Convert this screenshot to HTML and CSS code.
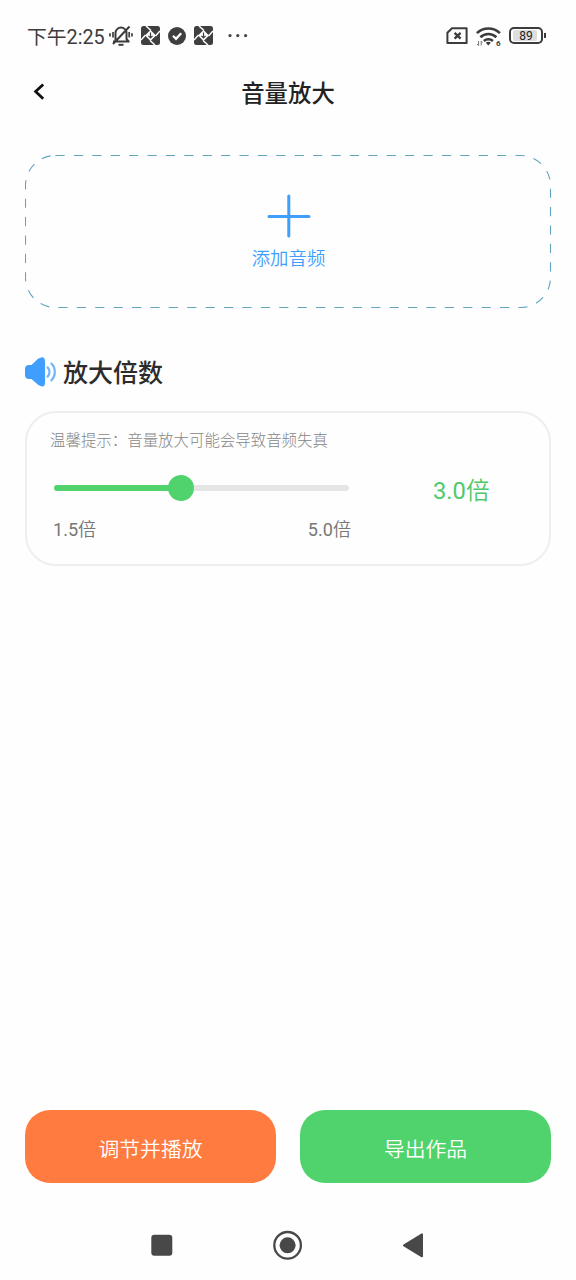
FILE: index.html
```html
<!DOCTYPE html>
<html lang="zh-CN">
<head>
<meta charset="utf-8">
<meta name="viewport" content="width=device-width, initial-scale=1">
<title>音量放大</title>
<link rel="stylesheet" href="styles.css">
</head>
<body>
<div class="screen">
  <div class="status">
    <span class="clock">下午2:25</span>
    <svg class="bell" width="24" height="22" viewBox="0 0 24 22" fill="none" stroke="#3c3c3c" stroke-width="2">
      <path d="M4 16.5H20.5M6.5 16V8a5.5 5.5 0 0 1 11 0V14l2.2 2.5M4 19 20.5 1.5"/>
      <path d="M9.5 19.8h5" stroke-width="2"/>
      <path d="M4 7v5.5M1 8.2v3.2M20.2 7v5.5M23 8.2v3.2" stroke-width="1.7"/>
    </svg>
    <svg class="app" width="19" height="19" viewBox="0 0 19 19">
      <rect width="19" height="19" rx="2.5" fill="#3f3f3f"/>
      <path d="M9.5 4 15 9.5 9.5 15 4 9.5z" fill="#fff"/>
      <path d="M10 4.5 5 0M14.5 10 19 5M9 14.5 14 19M4.5 9 0 14" stroke="#fff" stroke-width="1.5"/>
      <path d="M9.5 6.4v5.4M7.4 9.9l2.1 2.1 2.1-2.1" fill="none" stroke="#3f3f3f" stroke-width="1.2"/>
    </svg>
    <svg class="check" width="18" height="18" viewBox="0 0 18 18">
      <circle cx="9" cy="9" r="9" fill="#3f3f3f"/>
      <path d="M5 8.8 8 11.8 13.2 6.3" fill="none" stroke="#fff" stroke-width="2.3"/>
    </svg>
    <svg class="app" width="19" height="19" viewBox="0 0 19 19">
      <rect width="19" height="19" rx="2.5" fill="#3f3f3f"/>
      <path d="M9.5 4 15 9.5 9.5 15 4 9.5z" fill="#fff"/>
      <path d="M10 4.5 5 0M14.5 10 19 5M9 14.5 14 19M4.5 9 0 14" stroke="#fff" stroke-width="1.5"/>
      <path d="M9.5 6.4v5.4M7.4 9.9l2.1 2.1 2.1-2.1" fill="none" stroke="#3f3f3f" stroke-width="1.2"/>
    </svg>
    <svg class="dots" width="20" height="4" viewBox="0 0 20 4" fill="#444">
      <circle cx="2" cy="1.6" r="1.6"/><circle cx="9.8" cy="1.6" r="1.6"/><circle cx="17.6" cy="1.6" r="1.6"/>
    </svg>
    <div class="signals">
      <svg width="22" height="17" viewBox="0 0 22 17" fill="none" stroke="#3c3c3c" stroke-width="2">
        <path d="M6 1.2H20.6V16H1.4V5.8z" stroke-linejoin="round"/>
        <path d="M8.6 5.8 14.6 11.6M14.6 5.8 8.6 11.6" stroke-width="2.3"/>
      </svg>
      <svg class="wifi" width="25" height="20" viewBox="0 0 25 20" fill="none" stroke="#3c3c3c" stroke-width="2.6">
        <path d="M.9 6.1a16.5 16.5 0 0 1 23 0M4.4 10.2a11.5 11.5 0 0 1 16 0M7.9 14a6.6 6.6 0 0 1 9 0"/>
        <path d="M9.8 15.8a4 4 0 0 1 5 0L12.3 18.4z" fill="#3c3c3c" stroke="none"/>
        <path d="M2.6 14v4.5M1 17l1.6 1.6M5.2 18.5V14l1.3 1.5" stroke-width="1" stroke="#777"/>
        <text x="20" y="19.4" class="wifi-gen">6</text>
      </svg>
      <div class="battery"><span class="charge">89</span></div>
      <i class="nub"></i>
    </div>
  </div>

  <header class="titlebar">
    <svg class="back" width="12" height="18" viewBox="0 0 12 18" fill="none" stroke="#111" stroke-width="2.8">
      <path d="M10.2 1.4 2.6 8.6 10.2 15.7"/>
    </svg>
    <h1 class="title">音量放大</h1>
  </header>

  <main class="content">
    <div class="upload">
      <svg class="outline" width="527" height="154" viewBox="0 0 527 154">
        <rect x=".5" y="1.5" width="525" height="152" rx="30" fill="none" stroke="#62a3bf" stroke-width="1.1" stroke-dasharray="9.2 9.2"/>
      </svg>
      <svg class="plus" width="44" height="44" viewBox="0 0 44 44" stroke="#409eff" stroke-width="3" stroke-linecap="round">
        <path d="M21.8 2v40M2 22.5h40"/>
      </svg>
      <span class="upload-label">添加音频</span>
    </div>

    <div class="section">
      <svg width="32" height="30" viewBox="0 0 32 30">
        <path d="M0 12Q0 8.4 3.2 8H6.5L13 1.8Q19.6-2.4 20 4V26Q19.6 32 13 27.8L6.5 22H3.2Q0 21.6 0 18z" fill="#409eff"/>
        <path d="M22.6 10.4a6.5 6.5 0 0 1 0 9.2M26.4 6.6a12 12 0 0 1 0 16.8" fill="none" stroke="#409eff" stroke-opacity=".75" stroke-width="2.2" stroke-linecap="round"/>
      </svg>
      <h2 class="section-title">放大倍数</h2>
    </div>

    <section class="card">
      <p class="hint">温馨提示：音量放大可能会导致音频失真</p>
      <div class="control">
        <div class="slider">
          <div class="track">
            <div class="fill"></div>
            <div class="rest"></div>
            <div class="thumb"></div>
          </div>
          <div class="range"><span>1.5<span class="unit">倍</span></span><span>5.0<span class="unit">倍</span></span></div>
        </div>
        <div class="value">3.0<span class="unit">倍</span></div>
      </div>
    </section>
  </main>

  <div class="actions">
    <button class="btn play">调节并播放</button>
    <button class="btn export">导出作品</button>
  </div>

  <nav class="navbar">
    <svg width="22" height="22" viewBox="0 0 22 22"><rect x=".3" y=".8" width="21" height="21" rx="3" fill="#484848"/></svg>
    <svg width="30" height="30" viewBox="0 0 30 30"><circle cx="14.6" cy="15.3" r="13.3" fill="none" stroke="#484848" stroke-width="2.3"/><circle cx="14.6" cy="15.3" r="8" fill="#484848"/></svg>
    <svg width="22" height="26" viewBox="0 0 22 26"><path d="M2 13.3 20 2.3V24.3z" fill="#484848" stroke="#484848" stroke-width="2" stroke-linejoin="round"/></svg>
  </nav>
</div>
</body>
</html>
```
FILE: styles.css
```css
* { box-sizing: border-box; }

body {
  margin: 0;
  background: #fefefe;
  font-family: Roboto, "Noto Sans CJK SC", sans-serif;
  color: #222;
}

svg { display: block; flex: none; }
h1, h2, p { margin: 0; }

.screen {
  display: flex;
  flex-direction: column;
  width: 576px;
  height: 1280px;
}

/* system status bar */
.status {
  display: flex;
  align-items: center;
  height: 71px;
  padding: 0 30px 0 27px;
}
.clock {
  width: 78px;
  font-size: 19.8px;
  line-height: 24px;
  color: #3c3c3c;
  white-space: nowrap;
  padding-top: 4px;
}
.bell { margin-left: 4px; }
.app { margin-left: 8px; }
.check { margin-left: 8px; }
.dots { margin-left: 15px; }
.signals {
  display: flex;
  align-items: center;
  margin-left: auto;
}
.wifi { margin: 2px 8px 0 8px; }
.wifi-gen { font-size: 8px; font-weight: 700; fill: #3c3c3c; stroke: none; }
.battery {
  width: 34px;
  height: 17px;
  padding: 1px 2px;
  border: 2px solid #3c3c3c;
  border-radius: 5px;
}
.charge {
  display: block;
  width: 24px;
  height: 11px;
  border-radius: 2px;
  background: #dedede;
  font-size: 12px;
  line-height: 12px;
  text-align: center;
  color: #222;
  padding-left: 2px;
}
.nub { width: 2px; height: 5px; margin-left: 1px; background: #3c3c3c; }

/* page title */
.titlebar {
  display: grid;
  grid-template-columns: 100px 1fr 100px;
  align-items: center;
  height: 42px;
}
.back { margin-left: 33px; }
.title {
  font-size: 23.4px;
  font-weight: 500;
  line-height: 34px;
  text-align: center;
  padding-top: 3px;
}

.content {
  flex: 1;
  padding: 41px 25px 0;
}

/* upload box */
.upload {
  position: relative;
  display: flex;
  flex-direction: column;
  align-items: center;
  height: 154px;
  padding: 40px 0 0 1px;
}
.outline { position: absolute; left: 0; top: 0; }
.plus { margin-left: 1px; }
.upload-label {
  margin-top: 7px;
  font-size: 18.4px;
  font-weight: 350;
  line-height: 27px;
  color: #409eff;
}

/* section heading */
.section {
  display: flex;
  align-items: center;
  gap: 6px;
  height: 36px;
  margin-top: 46px;
}
.section-title {
  padding-top: 4px;
  font-size: 25px;
  font-weight: 500;
  line-height: 36px;
  color: #2c2c2c;
}

/* multiplier card */
.card {
  width: 526px;
  height: 155px;
  margin-top: 21px;
  padding: 17px 23px 0;
  border: 2px solid #eee;
  border-radius: 31px;
}
.hint { font-size: 15.45px; line-height: 23px; color: #868686; font-weight: 300; }
.unit { font-weight: 350; }
.control { display: flex; }
.slider { width: 303px; padding: 22px 0 0 4px; }
.track { display: grid; grid-template-columns: 114px 26px 155px; align-items: center; width: 295px; height: 26px; }
.fill, .rest, .thumb { grid-row: 1; }
.fill { grid-column: 1 / 3; height: 6px; border-radius: 3px; background: #50d36d; }
.thumb { grid-column: 2; width: 26px; height: 26px; border-radius: 50%; background: #50d36d; }
.rest { grid-column: 3; height: 6px; margin-left: -10px; border-radius: 0 3px 3px 0; background: #e5e5e5; }
.range {
  display: flex;
  justify-content: space-between;
  width: 298px;
  margin: 15px 0 0 -1px;
  font-size: 18.1px;
  line-height: 27px;
  color: #777;
}
.value { padding: 20px 0 0 80px; font-size: 23.7px; line-height: 36px; color: #50c96b; }

/* bottom buttons */
.actions {
  display: grid;
  grid-template-columns: 1fr 1fr;
  gap: 24px;
  padding: 0 25px;
}
.btn {
  height: 73px;
  padding: 2px 0 0;
  border: 0;
  border-radius: 25px;
  font-family: inherit;
  font-size: 20.8px;
  font-weight: 350;
  color: #fff;
}
.play { background: #ff7b40; }
.export { background: #50d36d; }

/* system navigation */
.navbar {
  display: flex;
  align-items: center;
  justify-content: space-between;
  height: 97px;
  padding: 27px 152px 0 151px;
}
```
